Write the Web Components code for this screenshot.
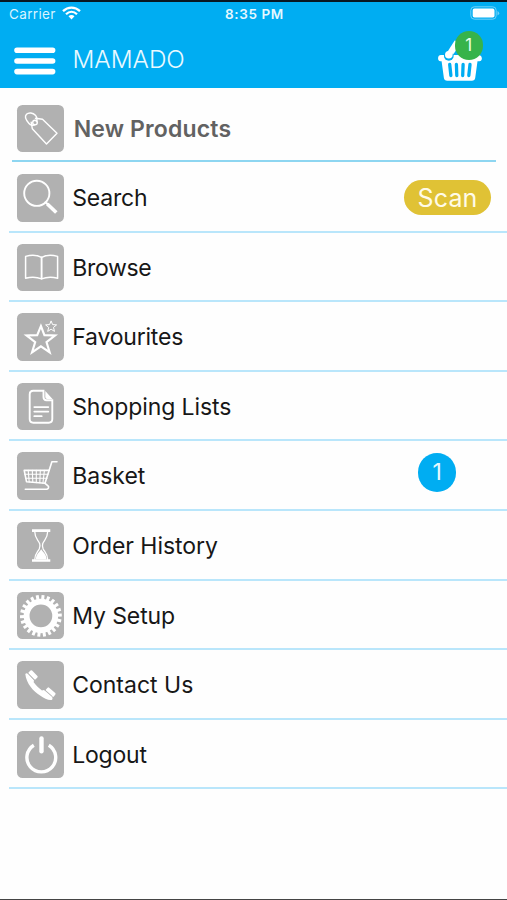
<!DOCTYPE html>
<html lang="en">
<head>
<meta charset="utf-8">
<title>MAMADO</title>
<style>
html, body { margin: 0; height: 100%; background: #fefefe; }
body { font-family: Inter, "Liberation Sans", sans-serif; }
</style>
</head>
<body>
<app-screen>
  <status-bar slot="top"></status-bar>
  <nav-bar slot="top" count="1">MAMADO</nav-bar>
  <menu-row icon="tag" lead style="--ls:0.15px">New Products</menu-row>
  <menu-row icon="search" style="--ls:-.2px">Search<pill-button slot="end">Scan</pill-button></menu-row>
  <menu-row icon="book" style="--ls:-.3px">Browse</menu-row>
  <menu-row icon="stars" style="--ls:-.2px">Favourites</menu-row>
  <menu-row icon="list" style="--ls:-.07px">Shopping Lists</menu-row>
  <menu-row icon="cart">Basket<count-badge slot="end">1</count-badge></menu-row>
  <menu-row icon="hourglass" style="--ls:-.05px">Order History</menu-row>
  <menu-row icon="gear" style="--ls:-.1px">My Setup</menu-row>
  <menu-row icon="phone">Contact Us</menu-row>
  <menu-row icon="power" style="--ls:-.2px">Logout</menu-row>
</app-screen>

<script>
const S = 'fill="none" stroke="#fff" stroke-linecap="round" stroke-linejoin="round"';

// A toothed ring: 22 teeth around an annulus
function gear() {
  let teeth = '';
  for (let i = 0; i < 22; i++) {
    teeth += `<rect x="22.4" y="3" width="3" height="5" fill="#fff" transform="rotate(${i * 360 / 22 + 6} 23.9 23.9)"/>`;
  }
  return teeth + '<circle cx="23.9" cy="23.9" r="14.3" fill="none" stroke="#fff" stroke-width="5.900"/>';
}

const ICONS = {
  tag: `<g ${S} stroke-width="1.4"><path d="M14.2 17.2 L15.3 23.7 L29.5 39 L40 28.2 L25.5 14.2 L18.5 13.3"/><circle cx="18" cy="17.6" r="2.3"/><path d="M18 19.4c-1.500 1.600-4.500 1-6.200-1.200C9 15 7.500 11.300 9.500 9.300c2.200-2.100 6.500-1.600 8.900 1 1.700 1.900 1.900 4.400 1 6.300"/></g>`,
  search: `<g ${S}><circle cx="19.800" cy="19.300" r="12.600" stroke-width="1.900"/><path d="M28.600 28.300l2.600 2.500" stroke-width="2.200"/><path d="M30.300 30l9 8.500" stroke-width="3.600" stroke-linecap="butt"/></g>`,
  book: `<g ${S} stroke-width="1.500"><path d="M24.600 13.400C20 10.800 13.500 10.800 8.600 12.400V34.200c5-1.200 11-1.300 16 .7 5-2 11-1.900 16-.7V12.400c-5-1.600-11.500-1.600-16 1z"/><path d="M24.600 13.400V34.500" stroke-width="1.900"/></g>`,
  stars: `<path d="M23.900 13l3.500 9.100 10.700.3-8.600 6.700 3.200 10.300-8.800-6.100-8.900 6.100 3.200-10.300-8.700-6.700 10.700-.3z" fill="none" stroke="#fff" stroke-width="2.100"/><path d="M34.100 7.900l1.500 3.700 4 .3-3.100 2.500 1 4-3.400-2.200-3.400 2.200 1-4-3.100-2.500 4-.3z" fill="none" stroke="#fff" stroke-width="1"/>`,
  list: `<path d="M26.500 7.800H16.300Q12.700 7.800 12.700 11.400V36Q12.700 39.700 16.300 39.700H31.700Q35.300 39.700 35.300 36V17.200H29.500Q26.500 17.200 26.500 14z" fill="none" stroke="#fff" stroke-width="1.900"/><path d="M28.300 7.900l7.200 8h-5.300q-1.900 0-1.900-1.900z" fill="#fff"/><path d="M17.300 24.100H31.300M17.300 28.600H31.300M17.300 33.200H24.700" stroke="#fff" stroke-width="1.800" stroke-linecap="round"/>`,
  cart: `<g ${S} stroke-width="1.600"><path d="M40 9.700h-5.100L28 31.300l3 2.500c1.400 1.300.2 3.500-1.700 3.500H8.300"/><path d="M32.200 18.400H7.200L9.500 29.700 28 31.300"/></g><path d="M7.700 22.300H31M8.500 26.200H30M11.200 18.400l1 11.600M15.300 18.400l.5 12M19.300 18.400v12.200M23.300 18.400l-.5 12.400M27.400 18.400l-1.500 12.800" ${S} stroke-width="1.100"/>`,
  hourglass: `<path d="M15 7.300H33.300V9.900H15zM15 37.200H33.300V39.800H15z" fill="#fff"/><path d="M17.800 10c0 6.500 3.500 8 4.900 11.700.7 2 .2 3.600-.5 5.200-1.400 3-4.400 5-4.400 10.400M30.600 10c0 6.500-3.500 8-4.900 11.700-.7 2-.2 3.600.5 5.200 1.400 3 4.400 5 4.400 10.400" ${S} stroke-width="1.300"/><path d="M24.200 27.200c1.500 3 5.200 4.500 5.300 10.100h-10.600c.1-5.600 3.800-7.100 5.300-10.100z" fill="#fff"/>`,
  gear: gear(),
  phone: `<path d="M8.300 12.900c1-.9 2-.6 2.800.2l5.400 5.600c.8.900.6 1.600 0 2.400 2.200 3.200 5.200 6.100 8.500 8.400.9-.7 1.700-.9 2.600-.1l6.700 5.700c1.200 1 1.700 2.300.8 3.600-3 .9-8-1.300-12-4.300C16.500 30.200 9.300 22.500 8.300 12.900z" fill="#fff"/><path d="M14.300 10.300l5.300 5.500-1.700 1.700-5.400-5.500z" fill="#fff" stroke="#fff" stroke-width="2.200" stroke-linejoin="round"/><path d="M31.400 27.500l6.100 5.400-1.500 1.900-6.200-5.500z" fill="#fff" stroke="#fff" stroke-width="2.200" stroke-linejoin="round"/><path d="M10.900 12.200l6.500 6.700M28.300 29.300l7.300 6.500" stroke="#b1b1b1" stroke-width=".8"/>`,
  power: `<path d="M16.800 14.200A14.400 14.400 0 1 0 31.800 14.200" fill="none" stroke="#fff" stroke-width="3.400"/><path d="M24.500 7.500V20.300" stroke="#fff" stroke-width="4.400" stroke-linecap="round"/>`
};

function define(name, render) {
  customElements.define(name, class extends HTMLElement {
    constructor() {
      super();
      this.attachShadow({ mode: 'open' }).innerHTML = render(this);
    }
  });
}

define('app-screen', () => `
<style>
:host { display: flex; flex-direction: column; box-sizing: border-box; height: 900px; overflow: hidden; border-bottom: 1px solid #444; }
header { height: 88.400px; flex: none; box-sizing: border-box; background: #00adf2; border-top: 2px solid #081722; }
main { padding-top: 5.200px; }
</style>
<header><slot name="top"></slot></header>
<main><slot></slot></main>`);

define('status-bar', () => `
<style>
:host { display: grid; grid-template-columns: 1fr auto 1fr; align-items: center; height: 24px; padding: 0 7px 0 9px; color: #d9f4ff; font-size: 13.500px; letter-spacing: .35px; line-height: 24px; }
.left { display: flex; align-items: center; gap: 6px; }
.time { font-weight: 600; font-size: 13.500px; letter-spacing: .6px; color: #e6f8ff; }
.battery { justify-self: end; margin-top: -1px; }
svg { display: block; }
.left svg { margin-top: -2px; }
</style>
<div class="left"><span>Carrier</span>
<svg width="19" height="16" viewBox="0 0 19 16" fill="none" stroke="#fff"><path d="M1 6.200C6 1.400 13 1.400 18 6.200" stroke-width="2.300"/><path d="M4 9.300c3.300-3.200 7.700-3.200 11 0" stroke-width="2.200"/><path d="M6.500 11.300c1.800-1.600 4.200-1.600 6 0L9.500 14.500z" fill="#fff" stroke="none"/></svg></div>
<span class="time">8:35 PM</span>
<svg class="battery" width="30" height="15" viewBox="0 0 30 15"><rect x=".8" y=".8" width="25.400" height="12.400" rx="3.500" fill="none" stroke="#70d0f8"/><rect x="2.700" y="2.600" width="21.800" height="9" rx="1.800" fill="#fff"/><path d="M27.500 5v4.500q1.700-.7 1.700-2.200T27.500 5z" fill="#70d0f8"/></svg>`);

define('nav-bar', el => `
<style>
:host { display: flex; align-items: center; height: 62.400px; padding: 0 24px 0 14px; color: #e9f9ff; }
.burger { display: block; margin-top: 8px; flex: none; }
h1 { flex: 1; margin: 3px 0 0 16.500px; font-weight: 300; font-size: 24.300px; line-height: 30px; letter-spacing: -.02px; }
.basket { position: relative; width: 46px; height: 50px; margin-top: -3px; }
.n { position: absolute; left: 17.500px; top: .5px; width: 28.500px; height: 28.500px; border-radius: 50%; background: #37b34a; color: #eaffea; font-size: 17px; line-height: 29px; text-align: center; }
svg { display: block; }
</style>
<svg class="burger" width="42" height="28" viewBox="0 0 42 28" stroke="#fff" stroke-width="5.600" stroke-linecap="round"><path d="M3 3.300H38.600M3 14H38.600M3 24.600H38.600"/></svg>
<h1><slot></slot></h1>
<div class="basket">
<svg width="46" height="50" viewBox="0 0 46 50"><path d="M4 24H42a3.200 3.200 0 0 1 .4 6.300H40.500L38.200 47q-.5 2.800-3.300 2.800H10.200Q7.400 49.800 6.900 47L4.600 30.300H3.500A3.200 3.200 0 0 1 4 24z" fill="#fff"/><path d="M12.700 33.500l1.200 11M19.400 33.500l.4 11M26.100 33.500l-.4 11M33 33.500l-1.200 11" stroke="#00adf2" stroke-width="3.300" stroke-linecap="round"/><path d="M12 25L21 11" stroke="#fff" stroke-width="5.500"/><circle cx="11.800" cy="24.800" r="4.900" fill="#00adf2"/><circle cx="11.800" cy="23.800" r="3.800" fill="#fff"/><path d="M12 23.500L20 11" stroke="#fff" stroke-width="5.500"/></svg>
<span class="n">${el.getAttribute('count')}</span>
</div>`);

define('menu-row', el => `
<style>
:host { display: flex; box-sizing: border-box; height: 69.570px; margin-left: 9px; padding: 0 0 0 7.700px; border-bottom: 2px solid #b9e6fb; color: #171717; font-size: 23px; }
:host([lead]) { height: 68.800px; margin: 0 11px .770px 12px; padding-left: 4.700px; border-bottom: 2px solid #8ed6f1; color: #626262; font-weight: 600; }
.icon { flex: none; width: 47.500px; height: 47.500px; margin-top: 11px; border-radius: 5.500px; background: #b1b1b1; }
.icon svg { display: block; }
.label { flex: 1; margin: 17px 0 0 8px; line-height: 36px; white-space: nowrap; letter-spacing: var(--ls, 0); }
:host([lead]) .label { margin-left: 9.500px; }
</style>
<div class="icon"><svg width="47.500" height="47.500" viewBox="0 0 47.500 47.500">${ICONS[el.getAttribute('icon')]}</svg></div>
<div class="label"><slot></slot></div>
<slot name="end"></slot>`);

define('pill-button', () => `
<style>
:host { display: block; box-sizing: border-box; width: 87px; height: 35px; margin: 17px 16px 0 0; border-radius: 17.500px; background: #e0c235; color: #fffbe8; font-size: 25px; line-height: 36.500px; text-align: center; letter-spacing: .1px; }
</style><slot></slot>`);

define('count-badge', () => `
<style>
:host { display: block; width: 38.500px; height: 38.500px; margin: 12px 50.700px 0 0; border-radius: 50%; background: #00adf2; color: #e6f8ff; font-size: 23px; line-height: 39px; text-align: center; }
</style><slot></slot>`);
</script>
</body>
</html>
